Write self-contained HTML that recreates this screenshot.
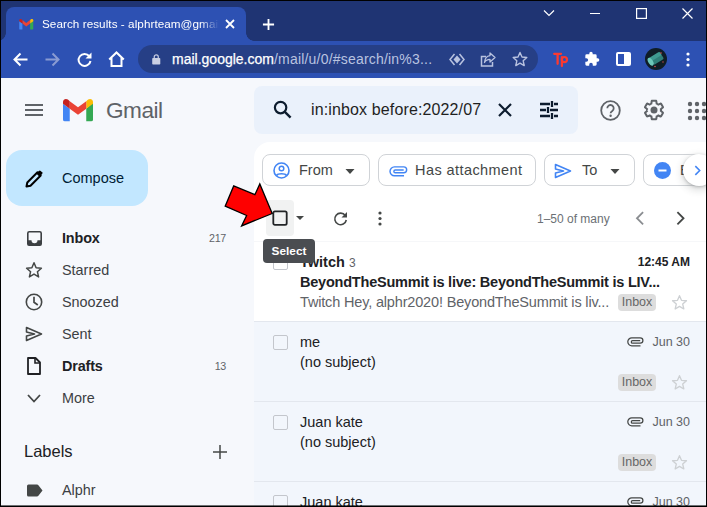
<!DOCTYPE html>
<html>
<head>
<meta charset="utf-8">
<style>
*{box-sizing:border-box;margin:0;padding:0}
html,body{width:707px;height:507px;overflow:hidden;background:#000}
body{font-family:"Liberation Sans",sans-serif;position:relative}
.abs{position:absolute}
#win{position:absolute;left:1px;top:1px;width:705px;height:505px;overflow:hidden;background:#f6f8fc}
/* browser chrome */
#titlebar{position:absolute;left:0;top:0;width:705px;height:40px;background:#1f3473}
#tab{position:absolute;left:5px;top:6px;width:240px;height:34px;background:#2d51b3;border-radius:8px 8px 0 0}
#tab:before{content:"";position:absolute;left:-8px;bottom:0;width:8px;height:8px;background:radial-gradient(circle at 0 0,transparent 7.5px,#2d51b3 8px)}
#tab:after{content:"";position:absolute;right:-8px;bottom:0;width:8px;height:8px;background:radial-gradient(circle at 100% 0,transparent 7.5px,#2d51b3 8px)}
#tabtitle{position:absolute;left:36px;top:9px;width:182px;height:16px;font-size:11.7px;line-height:16px;color:#fff;white-space:nowrap;overflow:hidden;-webkit-mask-image:linear-gradient(90deg,#000 158px,transparent 177px);mask-image:linear-gradient(90deg,#000 158px,transparent 177px);letter-spacing:.06px}
#toolbar{position:absolute;left:0;top:40px;width:705px;height:37px;background:#2d51b3}
#omni{position:absolute;left:137px;top:4px;width:400px;height:28px;border-radius:14px;background:#263f86}
#url{position:absolute;left:34px;top:5.5px;-webkit-text-stroke:.25px #fff;font-size:14px;line-height:17px;color:#fff;white-space:nowrap;letter-spacing:0px}
#url span{color:#b9c3e0;letter-spacing:.2px;-webkit-text-stroke:0}
svg{position:absolute;overflow:visible}
/* gmail */
#gm{position:absolute;left:0;top:77px;width:705px;height:427px;background:#f6f8fc}
.t{position:absolute;white-space:nowrap;line-height:1}
#search{position:absolute;left:253px;top:8px;width:323.5px;height:48px;background:#eaf1fb;border-radius:8px}
#compose{position:absolute;left:5px;top:72px;width:142px;height:56px;background:#c2e7ff;border-radius:16px}
#panel{position:absolute;left:253px;top:64px;width:460px;height:401px;background:#fff;border-radius:16px 0 0 0}
.chip{position:absolute;top:11px;height:32px;border:1px solid #d0d3d7;border-radius:8px;background:#fff}
.row{position:absolute;left:0;width:460px;height:80px;border-bottom:1px solid #e3e7ee}
.read{background:#f2f6fc}
.cb{position:absolute;left:18.5px;width:15px;height:15px;border:1.5px solid #c3c6cc;border-radius:2px}
.lab{position:absolute;left:364px;width:38px;height:17px;background:#dddddd;border-radius:4px;font-size:12.5px;line-height:17px;color:#666;text-align:center}
.nav{font-size:14.4px;color:#3c4043;left:61px}
.nav[style*="bold"]{letter-spacing:-.15px;color:#202124}
.cnt{font-size:10.7px;color:#5f6368;letter-spacing:-.3px;left:auto !important;right:480px}
</style>
</head>
<body>
<div id="win"><div class="abs" style="left:0;top:504px;width:705px;height:1px;background:rgba(0,0,0,.55);z-index:9"></div>
  <div id="titlebar">
    <div id="tab">
      <!-- gmail favicon -->
      <svg style="left:13px;top:12px" width="14.5" height="10.5" viewBox="0 0 16 12">
        <path d="M0 1.6V11a1 1 0 0 0 1 1h2.6V5.2L0 2.6z" fill="#4285f4"/>
        <path d="M12.4 12H15a1 1 0 0 0 1-1V1.6l-3.6 3.6z" fill="#34a853"/>
        <path d="M12.4 1.2v4L16 2.6V1.5c0-1.4-1.6-2-2.6-1.2z" fill="#fbbc04"/>
        <path d="M3.6 5.2v-4L8 4.5l4.4-3.3v4L8 8.5z" fill="#ea4335"/>
        <path d="M0 1.5v1.1l3.6 2.6v-4L2.6.3C1.600-.5 0 .1 0 1.5z" fill="#c5221f"/>
      </svg>
      <div id="tabtitle">Search results - alphrteam@gmail.com</div>
      <svg style="left:219px;top:12px" width="10" height="10" viewBox="0 0 10 10"><path d="M1 1l8 8M9 1l-8 8" stroke="#fff" stroke-width="1.800" fill="none"/></svg>
    </div>
    <svg style="left:260.5px;top:16.5px" width="13" height="13" viewBox="0 0 14 14"><path d="M7 1v12M1 7h12" stroke="#fff" stroke-width="2" fill="none"/></svg>
    <!-- window controls -->
    <svg style="left:542px;top:8px" width="12" height="8" viewBox="0 0 12 8"><path d="M1 1.500l5 5 5-5" stroke="#fff" stroke-width="1.200" fill="none"/></svg>
    <div class="abs" style="left:589px;top:12px;width:10px;height:1px;background:#fff"></div>
    <svg style="left:635px;top:7px" width="11" height="11" viewBox="0 0 11 11"><rect x=".6" y=".6" width="9.800" height="9.800" stroke="#fff" stroke-width="1.200" fill="none"/></svg>
    <svg style="left:681px;top:7px" width="11" height="11" viewBox="0 0 11 11"><path d="M.5.5l10 10M10.500.5l-10 10" stroke="#fff" stroke-width="1.200" fill="none"/></svg>
  </div>
  <div id="toolbar">
    <!-- back -->
    <svg style="left:11.5px;top:10.5px" width="15" height="15" viewBox="0 0 15 15"><path d="M14.500 7.500H2M7.500 1.500l-6 6 6 6" stroke="#fff" stroke-width="2" fill="none"/></svg>
    <svg style="left:43.5px;top:10.5px" width="15" height="15" viewBox="0 0 15 15"><path d="M.5 7.500H13M7.500 1.500l6 6-6 6" stroke="#8a9bd2" stroke-width="2" fill="none"/></svg>
    <!-- reload -->
    <svg style="left:76px;top:11px" width="15" height="15" viewBox="0 0 15 15"><path d="M12.300 4.200A6 6 0 1 0 13.500 9" stroke="#fff" stroke-width="2" fill="none"/><path d="M14.500 .5v6h-6z" fill="#fff"/></svg>
    <!-- home -->
    <svg style="left:107px;top:10px" width="17" height="16" viewBox="0 0 17 16"><path d="M1.200 8.500L8.500 1.500l7.300 7M3.500 7v8h10V7" stroke="#fff" stroke-width="2" fill="none" stroke-linejoin="miter"/></svg>
    <div id="omni">
      <svg style="left:14px;top:9px" width="8.5" height="10.5" viewBox="0 0 10 13"><rect x="0" y="5" width="10" height="8" rx="1" fill="#c9cfe3"/><path d="M2.500 5V3.500a2.500 2.500 0 0 1 5 0V5" stroke="#c9cfe3" stroke-width="1.500" fill="none"/></svg>
      <div id="url">mail.google.com<span>/mail/u/0/#search/in%3...</span></div>
      <!-- eye-ish diamond -->
      <svg style="left:311px;top:7.5px" width="16" height="13" viewBox="0 0 16 13"><path d="M5.500 1L1 6.500 5.500 12M10.500 1L15 6.500 10.500 12" stroke="#b9c3e0" stroke-width="1.500" fill="none"/><path d="M8 2.500l3.500 4L8 10.500 4.500 6.500z" fill="#b9c3e0"/></svg>
      <!-- share -->
      <svg style="left:342px;top:6.5px" width="16" height="15" viewBox="0 0 16 15"><path d="M6 4.500H1.500v9.500h11V10" stroke="#b9c3e0" stroke-width="1.500" fill="none"/><path d="M10 1l5 4.500-5 4.500V7.300C7 7.300 5.500 8.500 4.500 10.500 4.800 7 6.500 4 10 3.600z" stroke="#b9c3e0" stroke-width="1.300" fill="none" stroke-linejoin="round"/></svg>
      <!-- star -->
      <svg style="left:374px;top:5.5px" width="16" height="16" viewBox="0 0 16 16"><path d="M8 1.500l2 4.500 4.800.5-3.600 3.300 1 4.800L8 12.100l-4.200 2.500 1-4.800L1.200 6.500 6 6z" stroke="#b9c3e0" stroke-width="1.400" fill="none" stroke-linejoin="round"/></svg>
    </div>
    <!-- Tp -->
    <svg style="left:552px;top:10.5px" width="16" height="15" viewBox="0 0 16 15"><path d="M1.200 1.800h6.800M4.600 1.800v10M8.900 5.200v8.800" stroke="#fb3a30" stroke-width="2.300" stroke-linecap="round" fill="none"/><circle cx="11.400" cy="7.600" r="2.600" stroke="#fb3a30" stroke-width="2.200" fill="none"/></svg>
    <!-- puzzle -->
    <svg style="left:583px;top:10px" width="16" height="16" viewBox="0 0 24 24"><path d="M20.500 11H19V7a2 2 0 0 0-2-2h-4V3.500a2.500 2.500 0 0 0-5 0V5H4a2 2 0 0 0-2 2v3.800h1.500a2.700 2.700 0 0 1 0 5.400H2V20a2 2 0 0 0 2 2h3.800v-1.500a2.700 2.700 0 0 1 5.400 0V22H17a2 2 0 0 0 2-2v-4h1.500a2.500 2.500 0 0 0 0-5z" fill="#fff"/></svg>
    <!-- side panel -->
    <svg style="left:615px;top:11px" width="15" height="14" viewBox="0 0 15 14"><rect x="1" y="1" width="13" height="12" rx="1" stroke="#fff" stroke-width="2" fill="none"/><rect x="8" y="1" width="6" height="12" fill="#fff"/></svg>
    <!-- avatar -->
    <svg style="left:644px;top:7px" width="22" height="22" viewBox="0 0 22 22"><circle cx="11" cy="11" r="11" fill="#0f1d26"/><g transform="rotate(-32 11 11)"><rect x="4" y="6.500" width="14" height="5" rx="1.500" fill="#3f9a90"/><rect x="6" y="10.500" width="12" height="4.500" rx="1.500" fill="#2f7f78"/><ellipse cx="5" cy="10.500" rx="2.300" ry="4.300" fill="#6cc7ba"/></g><circle cx="16" cy="5" r=".8" fill="#d9534f"/><circle cx="10" cy="18.500" r=".8" fill="#d9534f"/><circle cx="18" cy="14" r=".7" fill="#d9534f"/></svg>
    <!-- menu -->
    <svg style="left:685px;top:11px" width="4" height="15" viewBox="0 0 4 15"><circle cx="2" cy="2" r="1.600" fill="#fff"/><circle cx="2" cy="7.500" r="1.600" fill="#fff"/><circle cx="2" cy="13" r="1.600" fill="#fff"/></svg>
  </div>

  <div id="gm">
    <!-- hamburger -->
    <svg style="left:24px;top:26px" width="18" height="12" viewBox="0 0 18 12" preserveAspectRatio="none"><path d="M0 1h18M0 6h18M0 11h18" stroke="#5f6368" stroke-width="2"/></svg>
    <!-- gmail logo -->
    <svg style="left:62px;top:20.6px" width="30" height="22.3" viewBox="0 0 16 12" preserveAspectRatio="none">
      <path d="M0 1.600V11a1 1 0 0 0 1 1h2.600V5.200L0 2.600z" fill="#4285f4"/>
      <path d="M12.400 12H15a1 1 0 0 0 1-1V1.600l-3.600 3.600z" fill="#34a853"/>
      <path d="M12.400 1.200v4L16 2.600V1.500c0-1.400-1.600-2-2.600-1.200z" fill="#fbbc04"/>
      <path d="M3.600 5.200v-4L8 4.500l4.400-3.300v4L8 8.500z" fill="#ea4335"/>
      <path d="M0 1.500v1.100l3.600 2.600v-4L2.600.3C1.600-.5 0 .1 0 1.500z" fill="#c5221f"/>
    </svg>
    <div class="t" style="left:105px;top:21.500px;font-size:22.600px;color:#5f6368;letter-spacing:-.5px">Gmail</div>

    <div id="search">
      <svg style="left:19px;top:14px" width="19" height="19" viewBox="0 0 20 20"><circle cx="8" cy="8" r="6" stroke="#0d1c2e" stroke-width="2.300" fill="none"/><path d="M12.500 12.500l6 6" stroke="#0d1c2e" stroke-width="2.500"/></svg>
      <div class="t" style="left:57px;top:16px;font-size:16px;color:#1f1f1f;letter-spacing:.13px">in:inbox before:2022/07</div>
      <svg style="left:244px;top:17px" width="14" height="14" viewBox="0 0 14 14"><path d="M1 1l12 12M13 1L1 13" stroke="#0d1c2e" stroke-width="2.200"/></svg>
      <!-- tune -->
      <svg style="left:286px;top:15px" width="18" height="18" viewBox="0 0 18 18"><path d="M0 3h10M14 3h4M0 9h6M10 9h8M0 15h10M14 15h4M12 0v6M8 6v6M12 12v6" stroke="#0d1c2e" stroke-width="2.300" fill="none"/></svg>
    </div>
    <!-- help -->
    <svg style="left:598.5px;top:22px" width="21" height="21" viewBox="0 0 21 21"><circle cx="10.500" cy="10.500" r="9.300" stroke="#5f6368" stroke-width="1.800" fill="none"/><path d="M7.300 8.300a3.200 3.200 0 1 1 5 2.600c-1 .7-1.700 1.200-1.700 2.400" stroke="#5f6368" stroke-width="1.800" fill="none"/><circle cx="10.600" cy="15.800" r="1.200" fill="#5f6368"/></svg>
    <!-- gear -->
    <svg style="left:641px;top:20px" width="24" height="24" viewBox="0 0 24 24"><path fill="#5f6368" d="M13.850 22.250h-3.700c-.74 0-1.360-.54-1.450-1.270l-.27-1.890c-.27-.14-.53-.29-.79-.46l-1.800.72c-.7.260-1.470-.03-1.810-.65L2.200 15.530c-.35-.66-.2-1.440.36-1.880l1.530-1.190c-.01-.15-.02-.3-.02-.46 0-.15.010-.31.020-.46l-1.520-1.190c-.59-.45-.74-1.260-.37-1.880l1.850-3.190c.34-.62 1.110-.9 1.790-.63l1.810.73c.26-.17.520-.32.780-.46l.27-1.910c.09-.7.710-1.250 1.440-1.250h3.700c.74 0 1.360.54 1.450 1.270l.27 1.890c.27.140.53.290.79.460l1.800-.72c.71-.26 1.480.03 1.820.65l1.840 3.180c.36.660.2 1.440-.36 1.880l-1.520 1.190c.1.150.2.300.2.460s-.1.310-.2.460l1.520 1.190c.56.450.72 1.230.37 1.860l-1.860 3.220c-.34.620-1.110.9-1.800.63l-1.800-.72c-.26.170-.52.320-.78.460l-.27 1.910c-.1.680-.72 1.220-1.460 1.220zm-3.230-2h2.760l.37-2.550.53-.22c.44-.18.880-.44 1.340-.78l.45-.34 2.380.96 1.380-2.400-2.030-1.580.07-.56c.03-.26.060-.51.060-.78s-.03-.53-.06-.78l-.07-.56 2.030-1.580-1.390-2.400-2.390.96-.45-.35c-.42-.32-.87-.58-1.330-.77l-.52-.22-.37-2.550h-2.760l-.37 2.550-.53.210c-.44.190-.88.440-1.340.79l-.45.330-2.380-.95-1.390 2.390 2.030 1.580-.07.560a7 7 0 0 0-.6.790c0 .26.020.53.060.78l.7.560-2.030 1.580 1.380 2.400 2.390-.96.450.35c.43.330.86.580 1.330.77l.53.220.38 2.550z"/><circle cx="12" cy="12" r="3.500" fill="#5f6368"/></svg>
    <!-- apps -->
    <svg style="left:687px;top:24px" width="18" height="18" viewBox="0 0 18 18"><g fill="#5f6368"><circle cx="2" cy="2" r="2.200"/><circle cx="9" cy="2" r="2.200"/><circle cx="16" cy="2" r="2.200"/><circle cx="2" cy="9" r="2.200"/><circle cx="9" cy="9" r="2.200"/><circle cx="16" cy="9" r="2.200"/><circle cx="2" cy="16" r="2.200"/><circle cx="9" cy="16" r="2.200"/><circle cx="16" cy="16" r="2.200"/></g></svg>

    <div id="compose">
      <svg style="left:19px;top:19px" width="19" height="19" viewBox="0 0 19 19"><path d="M1.5 17.500l.8-4L12.500 3.300l3.200 3.200L5.500 16.700z" stroke="#000" stroke-width="2" fill="none" stroke-linejoin="round"/><path d="M11.3 4.500l2.600-2.600a1.300 1.300 0 0 1 1.800 0l1.400 1.400a1.300 1.300 0 0 1 0 1.800l-2.600 2.600z" fill="#000"/></svg>
      <div class="t" style="left:56px;top:21px;font-size:14.5px;color:#001d35;font-weight:500">Compose</div>
    </div>

    <!-- nav -->
    <div class="t nav" style="top:153px;font-weight:bold">Inbox</div>
    <div class="t cnt" style="left:209px;top:155px">217</div>
    <div class="t nav" style="top:185px">Starred</div>
    <div class="t nav" style="top:217px">Snoozed</div>
    <div class="t nav" style="top:249px">Sent</div>
    <div class="t nav" style="top:281px;font-weight:bold">Drafts</div>
    <div class="t cnt" style="left:214px;top:283px">13</div>
    <div class="t nav" style="top:313px">More</div>
    <div class="t" style="left:23px;top:365px;font-size:16.500px;color:#202124">Labels</div>
    <svg style="left:212px;top:367px" width="14" height="14" viewBox="0 0 14 14"><path d="M7 0v14M0 7h14" stroke="#444746" stroke-width="1.500"/></svg>
    <div class="t nav" style="top:405px">Alphr</div>


    <!-- nav icons -->
    <svg style="left:26px;top:152.5px" width="15" height="15" viewBox="0 0 15 15"><rect x=".8" y=".8" width="13.4" height="13.4" rx="1.500" stroke="#3c4043" stroke-width="1.600" fill="none"/><path d="M.8 9.300h3.700a3 3 0 0 0 6 0h3.700v4.900H.8z" fill="#3c4043"/></svg>
    <svg style="left:24px;top:183px" width="18" height="17" viewBox="0 0 18 17"><path d="M9 1.800l2.100 4.900 5.300.5-4 3.500 1.200 5.200L9 13.100l-4.600 2.800 1.200-5.200-4-3.500 5.300-.5z" stroke="#444746" stroke-width="1.500" fill="none" stroke-linejoin="round"/></svg>
    <svg style="left:24px;top:215px" width="18" height="18" viewBox="0 0 18 18"><circle cx="9" cy="9" r="7.700" stroke="#444746" stroke-width="1.600" fill="none"/><path d="M9 3.800V9.300l3.800 2.700" stroke="#444746" stroke-width="1.700" fill="none"/></svg>
    <svg style="left:24px;top:248px" width="18" height="16" viewBox="0 0 18 16"><path d="M1.500 1.500l15 6.500-15 6.500V10l8-2-8-2z" stroke="#444746" stroke-width="1.600" fill="none" stroke-linejoin="round"/></svg>
    <svg style="left:26px;top:279px" width="14" height="18" viewBox="0 0 14 18"><path d="M1 1h7.500L13 5.500V17H1z" stroke="#202124" stroke-width="1.800" fill="none" stroke-linejoin="round"/><path d="M8 1v5h5" stroke="#202124" stroke-width="1.600" fill="none"/></svg>
    <svg style="left:26px;top:316px" width="14" height="9" viewBox="0 0 14 9"><path d="M1 1l6 6.500L13 1" stroke="#444746" stroke-width="1.800" fill="none"/></svg>
    <svg style="left:24.7px;top:405.5px" width="17" height="13" viewBox="0 0 17 13"><path d="M1 2a1.500 1.500 0 0 1 1.500-1.500h8.500c.6 0 1.100.3 1.400.7L16.500 6.500l-4.100 5.300c-.3.400-.8.700-1.400.7H2.500A1.500 1.500 0 0 1 1 11z" fill="#444746"/></svg>
    <div id="panel"><div class="abs" style="left:0;top:1px;width:460px;height:400px">

      <!-- chips -->
      <div class="chip" style="left:8px;width:108px">
        <svg style="left:10px;top:7px" width="17" height="17" viewBox="0 0 17 17"><circle cx="8.500" cy="8.500" r="7.500" stroke="#4285f4" stroke-width="1.600" fill="none"/><circle cx="8.500" cy="6.500" r="2.300" stroke="#4285f4" stroke-width="1.500" fill="none"/><path d="M3.500 13.500c1.500-2.200 8.500-2.200 10 0" stroke="#4285f4" stroke-width="1.500" fill="none"/></svg>
        <div class="t" style="left:36px;top:8px;font-size:14.500px;color:#444746;font-weight:500">From</div>
        <svg style="left:82px;top:14px" width="10" height="5" viewBox="0 0 9 5"><path d="M0 0h9L4.500 5z" fill="#444746"/></svg>
      </div>
      <div class="chip" style="left:124px;width:158px">
        <svg style="left:10px;top:10.500px" width="19" height="10.600" viewBox="0 0 17 9.600"><path d="M13.500 8.800H4.800a4 4 0 0 1 0-8h8.400a2.700 2.700 0 0 1 0 5.400H5.600a1.300 1.300 0 0 1 0-2.600h7.600" stroke="#4285f4" stroke-width="1.300" fill="none"/></svg>
        <div class="t" style="left:36px;top:8px;font-size:14.500px;color:#444746;font-weight:500;letter-spacing:.43px">Has attachment</div>
      </div>
      <div class="chip" style="left:290px;width:91px">
        <svg style="left:9px;top:8px" width="18" height="16" viewBox="0 0 18 16"><path d="M1.500 1.500l15 6.500-15 6.500V10l8-2-8-2z" stroke="#4285f4" stroke-width="1.600" fill="none" stroke-linejoin="round"/></svg>
        <div class="t" style="left:37px;top:8px;font-size:14.500px;color:#444746;font-weight:500">To</div>
        <svg style="left:65px;top:14px" width="10" height="5" viewBox="0 0 9 5"><path d="M0 0h9L4.500 5z" fill="#444746"/></svg>
      </div>
      <div class="chip" style="left:389px;width:100px">
        <svg style="left:10px;top:7px" width="17" height="17" viewBox="0 0 17 17"><circle cx="8.500" cy="8.500" r="8.500" fill="#4285f4"/><path d="M4.500 8.500h8" stroke="#fff" stroke-width="2"/></svg>
        <div class="t" style="left:36px;top:8px;font-size:14.500px;color:#444746;font-weight:500">Exclude calendar</div>
      </div>
      <div class="abs" style="left:434px;top:10px;width:26px;height:34px;background:linear-gradient(90deg,rgba(255,255,255,0),#fff 60%)"></div>
      <div class="abs" style="left:428.800px;top:11.200px;width:32px;height:32px;border-radius:50%;background:#fff;box-shadow:0 1px 3px rgba(60,64,67,.3),0 3px 7px 2px rgba(60,64,67,.15)"><svg style="left:11.300px;top:10.500px" width="7" height="11" viewBox="0 0 8 12"><path d="M1.500 1l5 5-5 5" stroke="#4285f4" stroke-width="1.800" fill="none"/></svg></div>

      <!-- toolbar -->
      <div class="abs" style="left:12px;top:57px;width:28px;height:36px;border-radius:4px;background:#f1f2f2"></div>
      <svg style="left:18px;top:67px" width="17" height="17" viewBox="0 0 17 17"><rect x="1.300" y="1.300" width="13.400" height="13.600" rx="1.600" stroke="#222426" stroke-width="1.800" fill="none"/></svg>
      <svg style="left:42px;top:73px" width="8" height="4" viewBox="0 0 8 4"><path d="M0 0h8L4 4z" fill="#444746"/></svg>
      <svg style="left:79px;top:68px" width="15" height="15" viewBox="0 0 15 15"><path d="M12.300 4.500A5.800 5.800 0 1 0 13.300 9" stroke="#444746" stroke-width="1.600" fill="none"/><path d="M14 1v5.500H8.500z" fill="#444746"/></svg>
      <svg style="left:124px;top:68px" width="4" height="15" viewBox="0 0 4 15"><circle cx="2" cy="2" r="1.600" fill="#444746"/><circle cx="2" cy="7.500" r="1.600" fill="#444746"/><circle cx="2" cy="13" r="1.600" fill="#444746"/></svg>
      <div class="t" style="left:283px;top:69.5px;font-size:12px;color:#6b7075">1&#8211;50 of many</div>
      <svg style="left:381px;top:68px" width="9.5" height="14.5" viewBox="0 0 8 13"><path d="M7 1L1.500 6.500 7 12" stroke="#8a8d91" stroke-width="1.600" fill="none"/></svg>
      <svg style="left:421.5px;top:68px" width="9.5" height="14.5" viewBox="0 0 8 13"><path d="M1 1l5.500 5.500L1 12" stroke="#444746" stroke-width="1.600" fill="none"/></svg>

      <div class="abs" style="left:0;top:97.5px;width:460px;height:1px;background:#f6f7f9"></div>
      <!-- rows -->
<div class="row unread" style="top:98.5px"><div class="cb" style="top:13px"></div><div class="t" style="left:46px;top:13px;font-size:14.500px;color:#202124;font-weight:bold;">Twitch <span style="font-weight:normal;font-size:12px;color:#5f6368">3</span></div><div class="t" style="left:46px;top:33px;font-size:14.500px;color:#202124;font-weight:bold;"><span style="letter-spacing:-.22px">BeyondTheSummit is live: BeyondTheSummit is LIV...</span></div><div class="t" style="left:46px;top:53px;font-size:14.500px;color:#5f6368"><span style="letter-spacing:-.165px">Twitch Hey, alphr2020! BeyondTheSummit is liv...</span></div><div class="t" style="right:24px;top:14px;font-size:12px;color:#202124;font-weight:bold">12:45 AM</div><div class="lab" style="top:52px">Inbox</div><svg style="left:417px;top:52px" width="17" height="16" viewBox="0 0 18 17"><path d="M9 1.800l2.100 4.900 5.300.5-4 3.500 1.200 5.200L9 13.100l-4.600 2.800 1.200-5.200-4-3.500 5.300-.5z" stroke="#cdd0d3" stroke-width="1.400" fill="none" stroke-linejoin="round"/></svg></div>
<div class="row read" style="top:178.5px"><div class="cb" style="top:13px"></div><div class="t" style="left:46px;top:13px;font-size:14.500px;color:#202124;">me</div><div class="t" style="left:46px;top:33px;font-size:14.500px;color:#202124;">(no subject)</div><svg style="left:372.500px;top:15.700px" width="17" height="9.600" viewBox="0 0 17 9.600"><path d="M13.500 8.800H4.800a4 4 0 0 1 0-8h8.400a2.700 2.700 0 0 1 0 5.400H5.600a1.300 1.300 0 0 1 0-2.600h7.600" stroke="#444746" stroke-width="1.250" fill="none"/></svg><div class="t" style="right:24px;top:14px;font-size:12.500px;color:#5f6368">Jun 30</div><div class="lab" style="top:52px">Inbox</div><svg style="left:417px;top:52px" width="17" height="16" viewBox="0 0 18 17"><path d="M9 1.800l2.100 4.900 5.300.5-4 3.500 1.200 5.200L9 13.100l-4.600 2.800 1.200-5.200-4-3.500 5.300-.5z" stroke="#cdd0d3" stroke-width="1.400" fill="none" stroke-linejoin="round"/></svg></div>
<div class="row read" style="top:258.5px"><div class="cb" style="top:13px"></div><div class="t" style="left:46px;top:13px;font-size:14.500px;color:#202124;">Juan kate</div><div class="t" style="left:46px;top:33px;font-size:14.500px;color:#202124;">(no subject)</div><svg style="left:372.500px;top:15.700px" width="17" height="9.600" viewBox="0 0 17 9.600"><path d="M13.500 8.800H4.800a4 4 0 0 1 0-8h8.400a2.700 2.700 0 0 1 0 5.400H5.600a1.300 1.300 0 0 1 0-2.600h7.600" stroke="#444746" stroke-width="1.250" fill="none"/></svg><div class="t" style="right:24px;top:14px;font-size:12.500px;color:#5f6368">Jun 30</div><div class="lab" style="top:52px">Inbox</div><svg style="left:417px;top:52px" width="17" height="16" viewBox="0 0 18 17"><path d="M9 1.800l2.100 4.900 5.300.5-4 3.500 1.200 5.200L9 13.100l-4.600 2.800 1.200-5.200-4-3.500 5.300-.5z" stroke="#cdd0d3" stroke-width="1.400" fill="none" stroke-linejoin="round"/></svg></div>
<div class="row read" style="top:338.5px"><div class="cb" style="top:13px"></div><div class="t" style="left:46px;top:13px;font-size:14.500px;color:#202124;">Juan kate</div><div class="t" style="left:46px;top:33px;font-size:14.500px;color:#202124;">(no subject)</div><svg style="left:372.500px;top:15.700px" width="17" height="9.600" viewBox="0 0 17 9.600"><path d="M13.500 8.800H4.800a4 4 0 0 1 0-8h8.400a2.700 2.700 0 0 1 0 5.400H5.600a1.300 1.300 0 0 1 0-2.600h7.600" stroke="#444746" stroke-width="1.250" fill="none"/></svg><div class="t" style="right:24px;top:14px;font-size:12.500px;color:#5f6368">Jun 30</div><div class="lab" style="top:52px">Inbox</div><svg style="left:417px;top:52px" width="17" height="16" viewBox="0 0 18 17"><path d="M9 1.800l2.100 4.900 5.300.5-4 3.500 1.200 5.200L9 13.100l-4.600 2.800 1.200-5.200-4-3.500 5.300-.5z" stroke="#cdd0d3" stroke-width="1.400" fill="none" stroke-linejoin="round"/></svg></div>

      <!-- tooltip -->
      <div class="abs" style="left:9px;top:96px;width:52px;height:24px;border-radius:4px;background:#4a4d51;color:#fff;font-size:11.800px;font-weight:bold;line-height:24px;text-align:center">Select</div>

    </div></div>

    <!-- red arrow -->
    <svg style="left:0;top:0" width="705" height="427" viewBox="1 78 705 427"><path d="M272.200 213.500L259.800 183.900 254.900 194.700 233.700 185.900 225.200 206.200 246.600 215.500 241.600 225.900z" fill="#fe0000" stroke="#000" stroke-width="1.300" stroke-linejoin="miter"/></svg>
  </div>
</div>
</body>
</html>
